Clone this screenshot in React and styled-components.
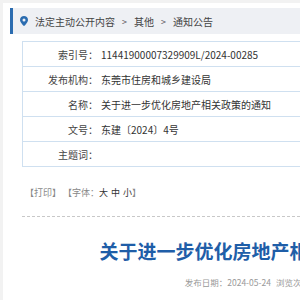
import React from "react";
import styled, { createGlobalStyle } from "styled-components";

const GlobalStyle = createGlobalStyle`
  html, body {
    margin: 0;
    padding: 0;
    overflow: hidden;
    background: #f2f2f2;
  }
  body {
    font-family: "Noto Sans CJK SC", "Noto Sans", sans-serif;
  }
`;

const rows = [
  { label: "索引号：", value: "11441900007329909L/2024-00285" },
  { label: "发布机构：", value: "东莞市住房和城乡建设局" },
  { label: "名称：", value: "关于进一步优化房地产相关政策的通知" },
  { label: "文号：", value: "东建〔2024〕4号" },
  { label: "主题词：", value: "" },
];

function PinIcon() {
  return (
    <svg width="8" height="10" viewBox="0 0 8 10">
      <path
        d="M4 0C1.8 0 0 1.7 0 3.9 0 6.6 4 10 4 10s4-3.4 4-6.1C8 1.7 6.2 0 4 0zm0 5.4a1.5 1.5 0 1 1 0-3 1.5 1.5 0 0 1 0 3z"
        fill="#2b6cb0"
      />
    </svg>
  );
}

function App() {
  return (
    <>
      <GlobalStyle />
      <Page>
        <Breadcrumb>
          <PinWrap>
            <PinIcon />
          </PinWrap>
          <Crumb>法定主动公开内容</Crumb>
          <Sep>&gt;</Sep>
          <Crumb>其他</Crumb>
          <Sep>&gt;</Sep>
          <Crumb>通知公告</Crumb>
        </Breadcrumb>
        <Content>
          <InfoTable>
            {rows.map((r) => (
              <Row key={r.label}>
                <Label>{r.label}</Label>
                <Value>{r.value}</Value>
              </Row>
            ))}
          </InfoTable>
          <Tools>
            <span>【打印】</span>
            <span>
              【字体：<Size>大</Size>
              <Size>中</Size>
              <Size>小</Size>】
            </span>
          </Tools>
          <Divider />
          <Title>关于进一步优化房地产相关政策的通知</Title>
          <Meta>
            <span>发布日期：2024-05-24</span>
            <span>浏览次数：1586</span>
          </Meta>
        </Content>
      </Page>
    </>
  );
}

export default App;

const Page = styled.div`
  margin: 3px 0 0 3px;
  padding: 5px 0 0 7px;
  background: #fff;
  width: 700px;
  height: 400px;
`;

const Breadcrumb = styled.div`
  display: flex;
  align-items: center;
  height: 26px;
  background: #eef0f4;
  border-left: 3px solid #2b6cb0;
  padding-left: 7px;
  font-size: 10px;
  color: #444;
`;

const PinWrap = styled.span`
  display: flex;
  margin-right: 7px;
`;

const Crumb = styled.span``;

const Sep = styled.span`
  margin: 0 7px;
  color: #555;
  font-size: 9px;
`;

const Content = styled.div`
  width: 478px;
  margin: 7px 0 0 12px;
`;

const InfoTable = styled.div`
  border: 1px solid #cfe0f0;
`;

const Row = styled.div`
  display: grid;
  grid-template-columns: 75px 1fr;
  align-items: center;
  height: 24px;
  font-size: 10px;
  & + & {
    border-top: 1px solid #cfe0f0;
  }
`;

const Label = styled.div`
  text-align: right;
  color: #444;
`;

const Value = styled.div`
  padding-left: 3px;
  color: #333;
`;

const Tools = styled.div`
  display: flex;
  gap: 2px;
  margin-top: 20px;
  padding-left: 3px;
  font-size: 9px;
  color: #888;
  line-height: 12px;
`;

const Size = styled.span`
  color: #333;
  margin-right: 3px;
  &:last-child {
    margin-right: 0;
  }
`;

const Divider = styled.div`
  margin-top: 17px;
  border-top: 1px dashed #c8c8c8;
`;

const Title = styled.h1`
  margin: 22px 0 0;
  text-align: center;
  font-size: 19px;
  line-height: 24px;
  font-weight: bold;
  color: #1f5ea8;
  white-space: nowrap;
`;

const Meta = styled.div`
  display: flex;
  justify-content: center;
  gap: 5px;
  margin-top: 13px;
  font-size: 8.5px;
  color: #999;
`;
